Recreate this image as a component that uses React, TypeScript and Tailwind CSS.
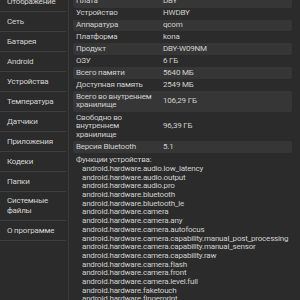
import React from "react";

const sidebar: string[][] = [
  ["Отображение"],
  ["Сеть"],
  ["Батарея"],
  ["Android"],
  ["Устройства"],
  ["Температура"],
  ["Датчики"],
  ["Приложения"],
  ["Кодеки"],
  ["Папки"],
  ["Системные", "файлы"],
  ["О программе"],
];

const rows: [string[], string][] = [
  [["Плата"], "DBY"],
  [["Устройство"], "HWDBY"],
  [["Аппаратура"], "qcom"],
  [["Платформа"], "kona"],
  [["Продукт"], "DBY-W09NM"],
  [["ОЗУ"], "6 ГБ"],
  [["Всего памяти"], "5640 МБ"],
  [["Доступная память"], "2549 МБ"],
  [["Всего во внутреннем", "хранилище"], "106,29 ГБ"],
  [["Свободно во", "внутреннем", "хранилище"], "96,39 ГБ"],
  [["Версия Bluetooth"], "5.1"],
];

const features = [
  "android.hardware.audio.low_latency",
  "android.hardware.audio.output",
  "android.hardware.audio.pro",
  "android.hardware.bluetooth",
  "android.hardware.bluetooth_le",
  "android.hardware.camera",
  "android.hardware.camera.any",
  "android.hardware.camera.autofocus",
  "android.hardware.camera.capability.manual_post_processing",
  "android.hardware.camera.capability.manual_sensor",
  "android.hardware.camera.capability.raw",
  "android.hardware.camera.flash",
  "android.hardware.camera.front",
  "android.hardware.camera.level.full",
  "android.hardware.faketouch",
  "android.hardware.fingerprint",
  "android.hardware.gamepad",
];

export default function App() {
  return (
    <div className="w-[300px] h-[300px] overflow-hidden bg-[#2b2b2b] flex font-[Roboto,sans-serif] tracking-[-0.2px]">
      <div className="w-[69px] shrink-0 border-r border-[#3a3a3a] h-full overflow-hidden">
        <div className="-mt-[8px] flex flex-col">
          {sidebar.map((lines, i) => (
            <div
              key={i}
              className="mr-[2px] border-b border-[#3e3e3e] min-h-[20px] flex flex-col justify-center pl-[7px] py-[4px] text-[8px] leading-[10px] text-[#d4d4d4]"
            >
              {lines.map((l, j) => (
                <span key={j}>{l}</span>
              ))}
            </div>
          ))}
        </div>
      </div>
      <div className="flex-1 h-full overflow-hidden pl-[4px] pr-[8px]">
        <div className="-mt-[4.25px] flex flex-col">
          {rows.map(([label, value], i) => (
            <div
              key={i}
              className={`flex items-center rounded-[2px] text-[8px] leading-[8.4px] text-[#cfcfcf] ${
                label.length > 1 ? "py-[2.1px]" : "h-[11.9px]"
              } ${i % 2 === 0 ? "bg-[#363636]" : ""}`}
            >
              <div className="w-[90px] shrink-0 pl-[3px] flex flex-col">
                {label.map((l, j) => (
                  <span key={j}>{l}</span>
                ))}
              </div>
              <div>{value}</div>
            </div>
          ))}
          <div className="pl-[3px] pt-[3px] text-[8px] leading-[8.7px] text-[#cfcfcf]">
            <div>Функции устройства:</div>
            <div className="pl-[6px]">
              {features.map((f) => (
                <div key={f} className="whitespace-nowrap">
                  {f}
                </div>
              ))}
            </div>
          </div>
        </div>
      </div>
    </div>
  );
}
